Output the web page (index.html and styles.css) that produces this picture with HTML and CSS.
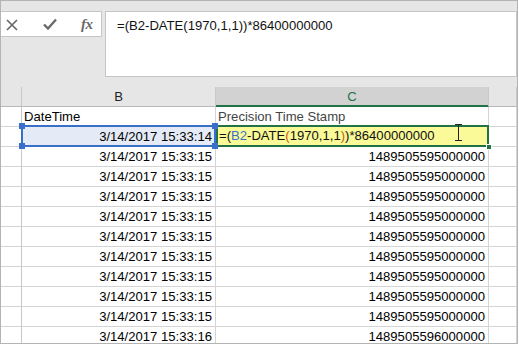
FILE: index.html
```html
<!DOCTYPE html>
<html lang="en">
<head>
  <meta charset="UTF-8" />
  <meta name="viewport" content="width=device-width, initial-scale=1" />
  <title>Precision Time Stamp</title>
  <link rel="stylesheet" href="styles.css">
</head>
<body>

  <main class="excel-window">
    <!-- Formula bar -->
    <section class="formula-area">
      <div class="fx-tools">
        <svg class="icon-cancel" width="12" height="12" viewBox="0 0 12 12">
          <path d="M1 1 L11 11 M11 1 L1 11" stroke="#6a6a6a" stroke-width="1.7" fill="none" />
        </svg>
        <svg class="icon-enter" width="14" height="12" viewBox="0 0 14 12">
          <path d="M1 6.5 L5 10.5 L13 1.5" stroke="#6a6a6a" stroke-width="2.4" fill="none" />
        </svg>
        <span class="icon-fx">fx</span>
      </div>
      <div class="formula-input">=(B2-DATE(1970,1,1))*86400000000</div>
    </section>

    <!-- Sheet grid -->
    <section class="sheet">
      <div class="col-head corner"></div>
      <div class="col-head">B</div>
      <div class="col-head active">C</div>
      <div class="col-head"></div>

      <div class="row-head"></div>
      <div class="cell">DateTime</div>
      <div class="cell label">Precision Time Stamp</div>
      <div class="cell"></div>

      <div class="row-head"></div>
      <div class="cell num ref-cell">3/14/2017 15:33:14
        <div class="ref-box">
          <span class="handle tl"></span><span class="handle tr"></span>
          <span class="handle bl"></span><span class="handle br"></span>
        </div>
      </div>
      <div class="cell edit-cell">
        <div class="editor">=(<span class="f-ref">B2</span>-DATE<span class="f-paren">(</span>1970,1,1<span class="f-paren">)</span>)*86400000000
          <svg class="ibeam" width="9" height="17" viewBox="0 0 9 17">
            <path d="M1 0.5 H8 M4.5 0.5 V16.5 M1 16.5 H8" stroke="#222" stroke-width="1" fill="none" />
          </svg>
          <span class="fill-handle"></span>
        </div>
      </div>
      <div class="cell"></div>

      <div class="row-head"></div><div class="cell num">3/14/2017 15:33:15</div><div class="cell num">1489505595000000</div><div class="cell"></div>
      <div class="row-head"></div><div class="cell num">3/14/2017 15:33:15</div><div class="cell num">1489505595000000</div><div class="cell"></div>
      <div class="row-head"></div><div class="cell num">3/14/2017 15:33:15</div><div class="cell num">1489505595000000</div><div class="cell"></div>
      <div class="row-head"></div><div class="cell num">3/14/2017 15:33:15</div><div class="cell num">1489505595000000</div><div class="cell"></div>
      <div class="row-head"></div><div class="cell num">3/14/2017 15:33:15</div><div class="cell num">1489505595000000</div><div class="cell"></div>
      <div class="row-head"></div><div class="cell num">3/14/2017 15:33:15</div><div class="cell num">1489505595000000</div><div class="cell"></div>
      <div class="row-head"></div><div class="cell num">3/14/2017 15:33:15</div><div class="cell num">1489505595000000</div><div class="cell"></div>
      <div class="row-head"></div><div class="cell num">3/14/2017 15:33:15</div><div class="cell num">1489505595000000</div><div class="cell"></div>
      <div class="row-head"></div><div class="cell num">3/14/2017 15:33:15</div><div class="cell num">1489505595000000</div><div class="cell"></div>
      <div class="row-head"></div><div class="cell num">3/14/2017 15:33:16</div><div class="cell num">1489505596000000</div><div class="cell"></div>
    </section>
  </main>

</body>
</html>
```

FILE: styles.css
```css
* {
  box-sizing: border-box;
  margin: 0;
  padding: 0;
}

body {
  font-family: 'Liberation Sans', Arial, sans-serif;
  font-size: 13.1px;
  background: #ffffff;
  color: #000;
}

.excel-window {
  width: 518px;
  height: 344px;
  border: 1px solid #b4b4b4;
  background: #e6e6e6;
  overflow: hidden;
}

/* Formula bar */
.formula-area {
  height: 86px;
  padding-top: 10px;
  display: flex;
  align-items: flex-start;
  gap: 3px;
}

.fx-tools {
  width: 101px;
  height: 26px;
  background: #ffffff;
  border: 1px solid #c6c6c6;
  border-left: none;
  display: flex;
  align-items: center;
  padding-left: 5px;
}

.icon-cancel {
  margin-top: 1px;
}

.icon-enter {
  margin-left: 25px;
}

.icon-fx {
  margin-left: 24px;
  font-family: 'Liberation Serif', serif;
  font-style: italic;
  font-weight: bold;
  font-size: 15px;
  color: #6a6a6a;
  letter-spacing: -0.5px;
}

.formula-input {
  flex: 1;
  height: 66px;
  background: #ffffff;
  border: 1px solid #c6c6c6;
  padding: 4px 11px;
  line-height: 19px;
  color: #111;
}

/* Sheet */
.sheet {
  display: grid;
  grid-template-columns: 21px 194px 273px 1fr;
  grid-auto-rows: 20px;
  background: #ffffff;
}

.col-head {
  background: #e6e6e6;
  border-right: 1px solid #c8c8c8;
  border-bottom: 1px solid #b8b8b8;
  text-align: center;
  line-height: 19px;
  color: #222;
}

.col-head.active {
  background: #d2d2d2;
  color: #217346;
  border-bottom: 1px solid #217346;
  box-shadow: inset 0 -1px 0 #217346;
}

.row-head {
  background: #ffffff;
  border-right: 1px solid #c8c8c8;
  border-bottom: 1px solid #d4d4d4;
}

.cell {
  position: relative;
  border-right: 1px solid #d4d4d4;
  border-bottom: 1px solid #d4d4d4;
  line-height: 19px;
  padding: 0 3px 0 2px;
  white-space: nowrap;
}

.cell.num {
  text-align: right;
}

.cell.label {
  color: #444;
}

/* B2 reference highlight */
.ref-cell {
  background: #e4ebf6;
  z-index: 2;
}

.ref-box {
  position: absolute;
  top: -2px;
  left: -1px;
  right: -1px;
  bottom: -1px;
  border: 2px solid #3a6fc9;
}

.handle {
  position: absolute;
  width: 6px;
  height: 6px;
  background: #3a6fc9;
}

.handle.tl { top: -4px; left: -4px; }
.handle.tr { top: -4px; right: -4px; }
.handle.bl { bottom: -4px; left: -4px; }
.handle.br { bottom: -4px; right: -4px; }

/* C2 in edit mode */
.edit-cell {
  z-index: 1;
}

.editor {
  position: absolute;
  top: -2px;
  left: 0;
  right: -1px;
  bottom: -1px;
  background: #fafa98;
  border: 2px solid #217346;
  padding-left: 1px;
  line-height: 18px;
  color: #111;
}

.f-ref {
  color: #3a6fc9;
}

.f-paren {
  color: #c55a11;
}

.ibeam {
  position: absolute;
  left: 236px;
  top: -3px;
}

.fill-handle {
  position: absolute;
  right: -5px;
  bottom: -5px;
  width: 6px;
  height: 6px;
  background: #217346;
  border: 1px solid #ffffff;
}
```
